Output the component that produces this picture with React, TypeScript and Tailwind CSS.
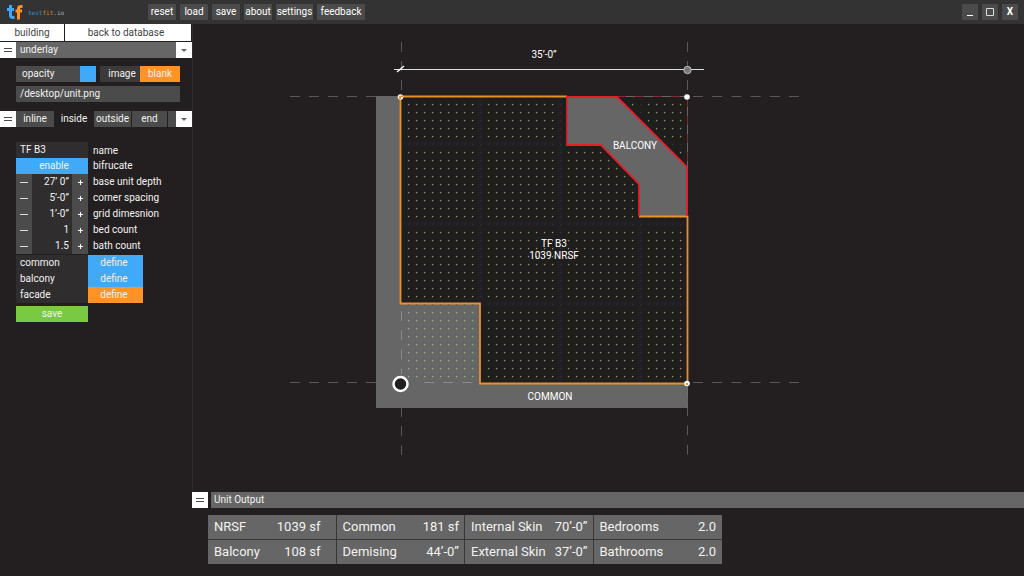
import type { ReactNode } from "react";

const dots: { x: number; y: number; major: boolean }[] = [];
for (let c = 1; c < 36; c++) {
  for (let r = 1; r < 36; r++) {
    dots.push({ x: 400 + c * 8 - 192, y: 96 + r * 8 - 24, major: c % 10 === 0 || r % 10 === 6 });
  }
}

function TopButton({ children, label, className = "" }: { children: ReactNode; label?: string; className?: string }) {
  return (
    <button type="button" aria-label={label} className={`flex h-4 items-center justify-center whitespace-nowrap bg-[#4b4b4b] text-white ${className}`}>
      {children}
    </button>
  );
}

function Grip() {
  return (
    <button type="button" aria-label="Move panel" className="flex h-4 w-4 shrink-0 items-center justify-center bg-white">
      <svg width="8" height="4" viewBox="0 0 8 4" stroke="#4a4a4a"><path d="M0 .5H8M0 3.5H8" /></svg>
    </button>
  );
}

function Drop() {
  return (
    <button type="button" aria-label="Open menu" className="flex h-4 w-4 shrink-0 items-center justify-center bg-white">
      <svg width="6" height="3" viewBox="0 0 6 3" fill="#666"><path d="M0 0H6L3 3Z" /></svg>
    </button>
  );
}

function Stepper({ id, value, label }: { id: string; value: string; label: string }) {
  return (
    <div className="flex h-4 items-center">
      <button type="button" aria-label={`Decrease ${label}`} className="flex h-4 w-4 items-center justify-center bg-[#4b4b4b]">
        <svg width="8" height="1" viewBox="0 0 8 1" fill="#ddd"><path d="M0 0H8V1H0Z" /></svg>
      </button>
      <input id={id} defaultValue={value} className="h-4 w-10 bg-[#302d2e] pr-[3px] text-right outline-none" />
      <button type="button" aria-label={`Increase ${label}`} className="flex h-4 w-4 items-center justify-center bg-[#4b4b4b]">
        <svg width="5" height="5" viewBox="0 0 5 5" stroke="#fff"><path d="M0 2.5H5M2.5 0V5" /></svg>
      </button>
      <label htmlFor={id} className="pl-[5px]">{label}</label>
    </div>
  );
}

function DefineRow({ name, color }: { name: string; color: string }) {
  return (
    <div className="flex h-4">
      <span className="w-18 bg-[#302d2e] pl-1">{name}</span>
      <button type="button" aria-label={`define ${name}`} className={`w-[55px] pr-[3px] ${color}`}>define</button>
    </div>
  );
}

function Header() {
  return (
    <header className="flex h-6 shrink-0 items-center bg-[#333] pr-1.5">
      <svg width="140" height="24" viewBox="0 0 140 24" role="img" aria-label="testfit.io" className="shrink-0">
        <path d="M10.500 5V15Q10.500 17.500 13 17.500H14.500M7 9.500H14" fill="none" stroke="#40a9f8" strokeWidth="3" />
        <path d="M22.500 6.500H21Q18.500 6.500 18.500 9V19.500M15.500 11H22" fill="none" stroke="#ff9326" strokeWidth="3" />
        <text x="28" y="15" fontSize="6" fontFamily="'DejaVu Sans Mono', monospace">
          <tspan fill="#3c8fcb">test</tspan><tspan fill="#d8842d">fit</tspan><tspan fill="#aaa">.io</tspan>
        </text>
      </svg>
      <nav className="ml-2 flex flex-1 gap-1">
        <TopButton className="w-7">reset</TopButton>
        <TopButton className="w-7">load</TopButton>
        <TopButton className="w-7">save</TopButton>
        <TopButton className="w-7">about</TopButton>
        <TopButton className="w-[37px]">settings</TopButton>
        <TopButton className="w-12">feedback</TopButton>
      </nav>
      <div className="flex gap-1">
        <TopButton label="Minimize" className="w-4"><svg width="6" height="8" viewBox="0 0 6 8" stroke="#fff"><path d="M0 7.500H6" /></svg></TopButton>
        <TopButton label="Maximize" className="w-4"><svg width="8" height="8" viewBox="0 0 8 8" fill="none" stroke="#ddd"><path d="M.5 .5H7.500V7.500H.5Z" /></svg></TopButton>
        <TopButton label="Close" className="w-4"><span className="font-bold">X</span></TopButton>
      </div>
    </header>
  );
}

function Sidebar() {
  return (
    <aside className="w-48 shrink-0">
      <div className="flex h-[17px] gap-px pr-px text-[#444]">
        <button type="button" className="w-16 bg-white">building</button>
        <button type="button" className="flex-1 bg-white pr-1">back to database</button>
      </div>
      <div className="mt-px flex h-4 bg-[#666]">
        <Grip />
        <h2 className="flex-1 pl-1">underlay</h2>
        <Drop />
      </div>
      <div className="flex flex-col gap-1 pt-2 pr-3 pb-[9px] pl-4">
        <div className="flex h-4 gap-1">
          <label htmlFor="opacity" className="flex w-20 justify-between bg-[#4b4b4b] pl-1.5">
            opacity
            <input id="opacity" type="range" className="h-4 w-4 appearance-none bg-[#40a9f8] [&::-webkit-slider-thumb]:appearance-none" />
          </label>
          <div className="flex flex-1">
            <button type="button" className="flex-1 bg-[#3c393a] pl-1">image</button>
            <button type="button" className="w-10 bg-[#ff9326]">blank</button>
          </div>
        </div>
        <input aria-label="Underlay image path" defaultValue="/desktop/unit.png" className="h-4 w-full bg-[#4b4b4b] pl-1 outline-none" />
      </div>
      <div className="flex h-4">
        <Grip />
        <div className="flex flex-1 gap-px">
          <button type="button" className="w-[38px] bg-[#4b4b4b]">inline</button>
          <button type="button" className="w-[38px]">inside</button>
          <button type="button" className="w-[37px] bg-[#4b4b4b]">outside</button>
          <button type="button" className="w-[35px] bg-[#4b4b4b]">end</button>
          <span className="flex-1 bg-[#4b4b4b]" />
        </div>
        <Drop />
      </div>
      <form className="pt-[15px] pl-4">
        <div className="flex h-4">
          <input id="name" defaultValue="TF B3" className="h-4 w-18 bg-[#302d2e] pl-1 outline-none" />
          <label htmlFor="name" className="pt-px pl-[5px]">name</label>
        </div>
        <div className="flex h-4">
          <button id="bifurcate" type="button" className="w-18 bg-[#40a9f8] pl-1">enable</button>
          <label htmlFor="bifurcate" className="pl-[5px]">bifrucate</label>
        </div>
        <Stepper id="depth" value="27’ 0”" label="base unit depth" />
        <Stepper id="corner" value="5’-0”" label="corner spacing" />
        <Stepper id="grid" value="1’-0”" label="grid dimesnion" />
        <Stepper id="beds" value="1" label="bed count" />
        <Stepper id="baths" value="1.5" label="bath count" />
        <div className="pt-px">
          <DefineRow name="common" color="bg-[#40a9f8]" />
          <DefineRow name="balcony" color="bg-[#40a9f8]" />
          <DefineRow name="facade" color="bg-[#ff9326]" />
        </div>
        <button type="button" className="mt-[3px] block h-4 w-18 bg-[#7ac943]">save</button>
      </form>
    </aside>
  );
}

function Plan() {
  return (
    <div className="min-h-0 flex-1 overflow-hidden border-l border-[#302c2d]">
      <svg width="831" height="467" viewBox="1 0 831 467" role="img" aria-label="Floor plan of unit TF B3" className="block">
        <path d="M184 72H496V384H184Z" fill="#666" />
        <path d="M209 73H375V121H409L447 160V192H495V359H288V279H209Z" fill="#1f1e1c" />
        <path d="M425 73H495V143Z" fill="#1f1e1c" />
        <path d="M288 73V279M368 73V359M448 192V359M209 120H375M209 200H495M289 280H495" fill="none" stroke="#221f24" strokeWidth="5" />
        {dots.map((d) => (
          <circle key={`${d.x}-${d.y}`} cx={d.x + 0.6} cy={d.y + 0.6} r="0.8" fill={d.major ? "#35313d" : d.x < 287 && d.y > 279 ? "#8fbd70" : "#8c9a70"} />
        ))}
        <g fill="none" stroke="#777" strokeOpacity="0.65">
          <path d="M98 72.500H184M98 358.500H184" strokeDasharray="10 9" />
          <path d="M501 72.500H607M501 358.500H607" strokeDasharray="10 9.200" />
          <path d="M209.500 18V72M495.500 18V72" strokeDasharray="10 9" />
          <path d="M209.500 383V431M495.500 363V431" strokeDasharray="10 9.200" />
        </g>
        <g fill="none" stroke="#8a8a8a">
          <path d="M209.500 287V350" strokeDasharray="10 9.200" />
          <path d="M232 358.500H286" strokeDasharray="10 9.200" />
        </g>
        <path d="M425 72.500H495.500V143" fill="none" stroke="#8b2732" strokeDasharray="9 9" />
        <path d="M375 73H425L495 143V192H447V160L409 121H375Z" fill="#666" />
        <path d="M375 72.500H208.500V279.500H288V359.500H495.500V192.500H447" fill="none" stroke="#e8902f" strokeWidth="1.800" />
        <path d="M447 192V160L409 121H375V73H425L495 143V192" fill="none" stroke="#e22028" strokeWidth="1.800" />
        <path d="M202 45.500H512" stroke="#ddd" />
        <path d="M205 48L212 42" stroke="#fff" strokeWidth="1.500" />
        <circle cx="495.500" cy="46" r="3.700" fill="#777" stroke="#bbb" />
        <g fill="#fff">
          <circle cx="208.500" cy="73" r="2.800" />
          <circle cx="495" cy="73" r="2.800" />
          <circle cx="495" cy="359.500" r="2.800" />
        </g>
        <path d="M207 75V73Q207 71.500 209 71.500H211V73H209V75ZM494 359H496V361H494Z" fill="#e8902f" />
        <circle cx="208.500" cy="360" r="7" fill="#231f20" stroke="#fff" strokeWidth="2.500" />
        <g fill="#fff" textAnchor="middle" fontSize="10">
          <text x="352" y="34">35’-0”</text>
          <text x="443" y="125">BALCONY</text>
          <text x="362" y="223">TF B3</text>
          <text x="362" y="235">1039 NRSF</text>
          <text x="358" y="376">COMMON</text>
        </g>
      </svg>
    </div>
  );
}

const rows = [
  [["NRSF", "1039 sf"], ["Common", "181 sf"], ["Internal Skin", "70’-0”"], ["Bedrooms", "2.0"]],
  [["Balcony", "108 sf"], ["Demising", "44’-0”"], ["External Skin", "37’-0”"], ["Bathrooms", "2.0"]],
];

const valuePadding = ["pr-[15px]", "pr-[5px]", "pr-[5px]", "pr-1.5"];

function UnitOutput() {
  return (
    <section className="shrink-0 pb-3">
      <div className="flex h-4 gap-[3px]">
        <Grip />
        <h2 className="flex-1 bg-[#666] pl-[3px]">Unit Output</h2>
      </div>
      <table className="mt-[7px] ml-4 w-[514px] table-fixed border-separate border-spacing-0 text-[13px] leading-6">
        <tbody>
          {rows.map((row, r) => (
            <tr key={r} className="group">
              {row.map(([label, value], c) => (
                <td key={label} className="border-r border-[#393637] bg-[#666] p-0 last:border-r-0 group-first:border-b">
                  <div className={`flex justify-between pl-1.5 ${valuePadding[c]}`}>
                    <span>{label}</span>
                    <span>{value}</span>
                  </div>
                </td>
              ))}
            </tr>
          ))}
        </tbody>
      </table>
    </section>
  );
}

export default function App() {
  return (
    <div className="flex min-h-screen flex-col bg-[#231f20] font-['Roboto',sans-serif] text-[10px] leading-4 text-[#f2f2f2]">
      <Header />
      <div className="flex flex-1">
        <Sidebar />
        <main className="flex min-w-0 flex-1 flex-col">
          <Plan />
          <UnitOutput />
        </main>
      </div>
    </div>
  );
}
